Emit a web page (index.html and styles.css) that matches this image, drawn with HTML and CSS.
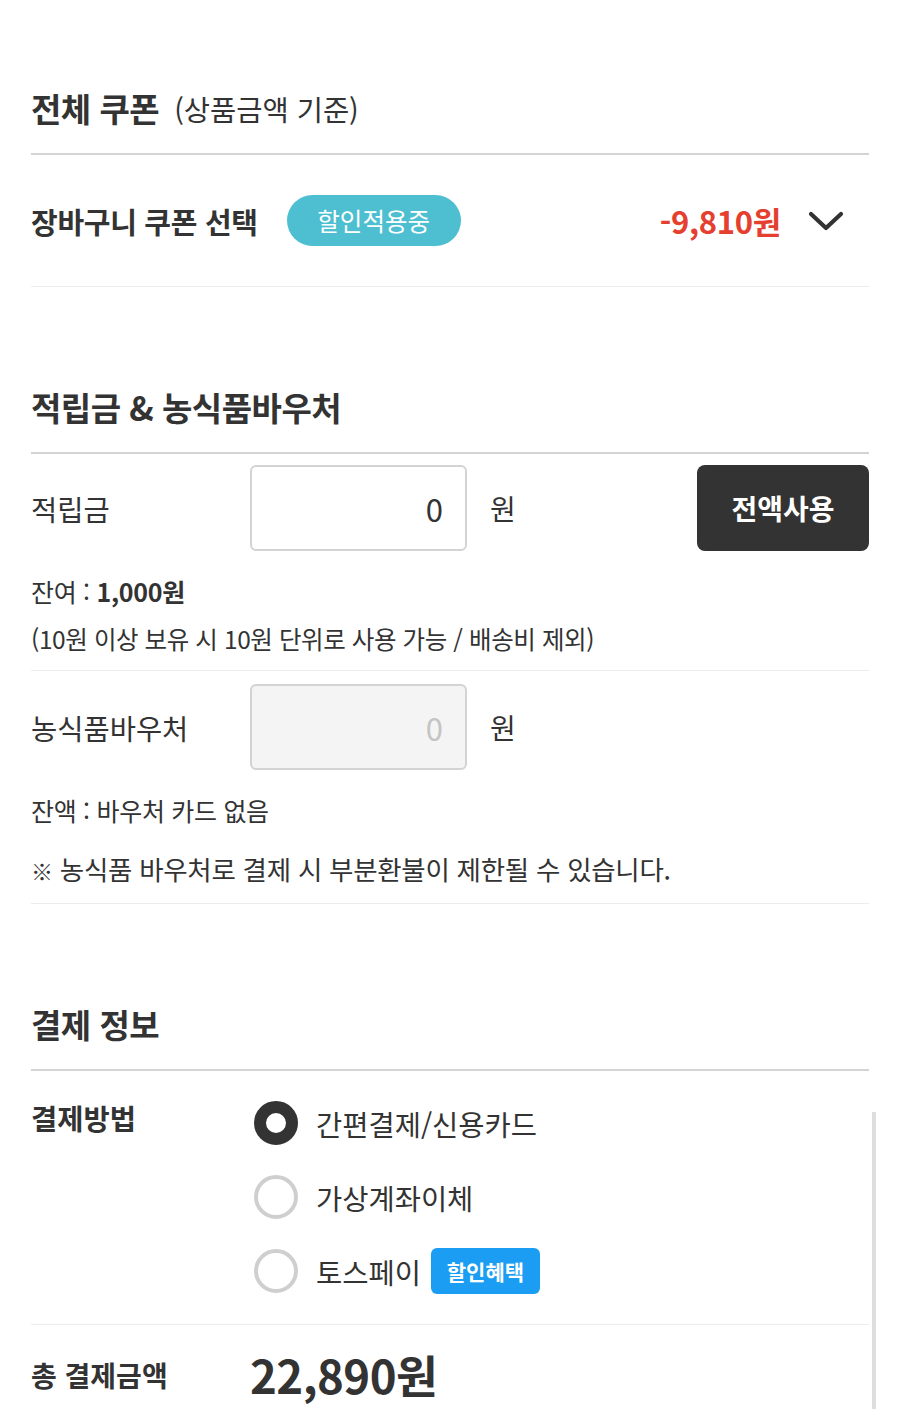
FILE: index.html
```html
<!DOCTYPE html>
<html lang="ko">
<head>
<meta charset="utf-8">
<link rel="stylesheet" href="styles.css">
</head>
<body>
<div class="page">
  <section class="section">
    <div class="section-head">
      <h2 class="title">전체 쿠폰</h2>
      <span class="title-sub">(상품금액 기준)</span>
    </div>
    <div class="coupon-row">
      <span class="coupon-label">장바구니 쿠폰 선택</span>
      <span class="coupon-badge">할인적용중</span>
      <span class="coupon-amount">-9,810원</span>
      <svg class="chevron" width="36" height="22" viewBox="0 0 36 22"><polyline points="3,4 18,18 33,4" fill="none" stroke="#333" stroke-width="4.2" stroke-linecap="round" stroke-linejoin="round"/></svg>
    </div>
  </section>

  <section class="section">
    <div class="section-head">
      <h2 class="title">적립금 &amp; 농식품바우처</h2>
    </div>
    <div class="points">
      <div class="field-row">
        <span class="field-label">적립금</span>
        <div class="amount-input">0</div>
        <span class="unit">원</span>
        <button class="use-all">전액사용</button>
      </div>
      <p class="note note-first">잔여 : <b>1,000원</b></p>
      <p class="note small">(10원 이상 보유 시 10원 단위로 사용 가능 / 배송비 제외)</p>
    </div>
    <div class="voucher">
      <div class="field-row">
        <span class="field-label">농식품바우처</span>
        <div class="amount-input disabled">0</div>
        <span class="unit">원</span>
      </div>
      <p class="note note-first">잔액 : 바우처 카드 없음</p>
      <p class="note warn"><span class="mark">※</span> 농식품 바우처로 결제 시 부분환불이 제한될 수 있습니다.</p>
    </div>
  </section>

  <section class="section payment">
    <div class="section-head">
      <h2 class="title">결제 정보</h2>
    </div>
    <div class="method-row">
      <span class="method-label">결제방법</span>
      <div class="options">
        <div class="option"><span class="radio checked"></span><span class="option-text">간편결제/신용카드</span></div>
        <div class="option"><span class="radio"></span><span class="option-text">가상계좌이체</span></div>
        <div class="option"><span class="radio"></span><span class="option-text">토스페이</span><span class="benefit">할인혜택</span></div>
      </div>
    </div>
    <div class="total-row">
      <span class="total-label">총 결제금액</span>
      <span class="total-value">22,890원</span>
    </div>
    <div class="scrollbar"></div>
  </section>
</div>
</body>
</html>
```

FILE: styles.css
```css
* { box-sizing: border-box; }
html, body { margin: 0; padding: 0; background: #fff; }
body {
  font-family: "Noto Sans CJK KR", "Noto Sans", sans-serif;
  color: #333;
  overflow: hidden;
}
.page {
  width: 900px;
  padding: 63px 31px 0 31px;
}
.section + .section { margin-top: 75px; }
.section-head {
  display: flex;
  align-items: center;
  height: 92px;
  border-bottom: 2px solid #d4d4d4;
}
.title {
  margin: 0;
  font-size: 33px;
  font-weight: 700;
  letter-spacing: -0.5px;
  color: #333;
}
.title-sub {
  margin-left: 15px;
  font-size: 28.5px;
  font-weight: 400;
  color: #333;
}
.coupon-row {
  display: flex;
  align-items: center;
  height: 132px;
  border-bottom: 1px solid #ededed;
}
.coupon-label {
  font-size: 29px;
  font-weight: 700;
  letter-spacing: -0.3px;
}
.coupon-badge {
  margin-left: 29px;
  width: 174px;
  height: 51px;
  border-radius: 26px;
  background: #4dbfd0;
  color: #fff;
  font-size: 24.5px;
  display: flex;
  align-items: center;
  justify-content: center;
}
.coupon-amount {
  margin-left: auto;
  font-size: 31px;
  font-weight: 700;
  letter-spacing: -0.3px;
  color: #e5402f;
}
.chevron { margin-left: 27px; margin-right: 25px; }

.points {
  padding: 11px 0 11px;
  border-bottom: 1px solid #ededed;
}
.voucher {
  padding: 13px 0 13px;
  border-bottom: 1px solid #ededed;
}
.field-row {
  display: flex;
  align-items: center;
  height: 86px;
}
.field-label {
  width: 219px;
  font-size: 28.5px;
}
.amount-input {
  width: 217px;
  height: 86px;
  border: 2px solid #d3d3d3;
  border-radius: 6px;
  display: flex;
  align-items: center;
  justify-content: flex-end;
  padding-right: 22px;
  font-size: 31px;
  color: #333;
}
.amount-input.disabled {
  background: #f4f4f4;
  color: #c4c4c4;
}
.unit {
  margin-left: 23px;
  font-size: 28px;
}
.use-all {
  margin-left: auto;
  width: 172px;
  height: 86px;
  border: 0;
  border-radius: 8px;
  background: #333;
  color: #fff;
  font-family: inherit;
  font-size: 28px;
  font-weight: 700;
}
.note {
  margin: 8px 0 0;
  font-size: 25px;
  line-height: 40px;
  letter-spacing: -0.3px;
}
.note.small { font-size: 24.5px; letter-spacing: -0.4px; }
.note-first { margin-top: 20px; }
.note b { font-weight: 700; }
.note.warn { margin-top: 19px; font-size: 26.5px; }
.mark { font-size: 22px; font-weight: 700; }

.payment { position: relative; }
.method-row {
  display: flex;
  align-items: flex-start;
  padding: 30px 0 31px;
  border-bottom: 1px solid #ededed;
}
.method-label {
  width: 223px;
  font-size: 28.5px;
  font-weight: 700;
  line-height: 40px;
  margin-top: -3px;
}
.options {
  display: flex;
  flex-direction: column;
  gap: 30px;
}
.option {
  display: flex;
  align-items: center;
  height: 44px;
}
.radio {
  width: 44px;
  height: 44px;
  border-radius: 50%;
  border: 4px solid #cfcfcf;
  flex: none;
}
.radio.checked { border: 12px solid #333; }
.option-text {
  margin-left: 18px;
  font-size: 28.5px;
  color: #333;
}
.benefit {
  margin-left: 10px;
  width: 109px;
  height: 46px;
  border-radius: 6px;
  background: #1a9df2;
  color: #fff;
  font-size: 21px;
  font-weight: 700;
  display: flex;
  align-items: center;
  justify-content: center;
}
.total-row {
  display: flex;
  align-items: center;
  height: 84px;
  padding-top: 16px;
}
.total-label {
  width: 219px;
  font-size: 28px;
  font-weight: 700;
}
.total-value {
  font-size: 45.5px;
  font-weight: 700;
  letter-spacing: -0.5px;
  line-height: 1;
}
.scrollbar {
  position: absolute;
  right: -7px;
  top: 133px;
  bottom: 0;
  width: 4px;
  background: #dedede;
}
```
